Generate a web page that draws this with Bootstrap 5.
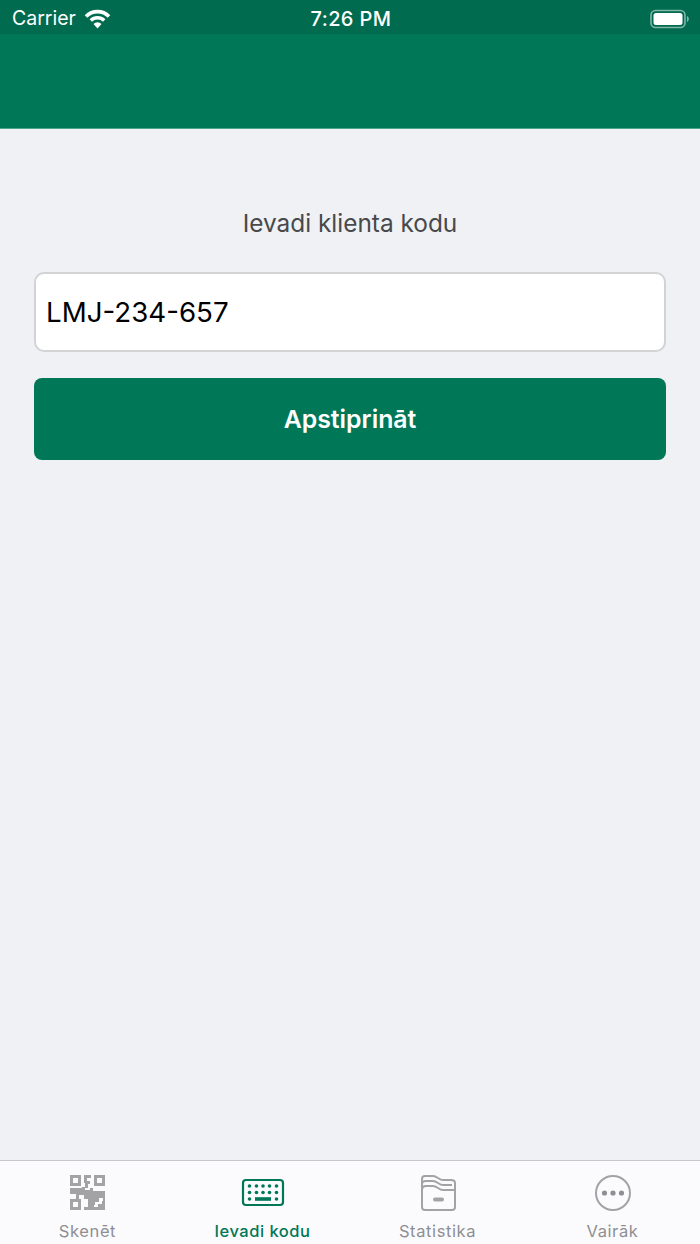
<!DOCTYPE html>
<html lang="lv">
<head>
  <meta charset="UTF-8">
  <title>Ievadi kodu</title>
  <link href="https://cdn.jsdelivr.net/npm/bootstrap@5.3.0/dist/css/bootstrap.min.css" rel="stylesheet">
  <style>
    body { font-family: Inter, "Liberation Sans", sans-serif; background: #eff1f5; }
    .app-screen { height: 1244px; width: 700px; overflow: hidden; }
    .status-bar { height: 34px; background: #006b4f; color: #fff; font-size: 19.5px; padding: 3px 10px 0 12px; }
    .status-left { width: 250px; }
    .status-right { width: 250px; }
    .status-time { font-size: 20px; font-weight: 500; letter-spacing: .4px; }
    .head-bar { height: 95px; background: #007857; border-bottom: 1px solid #4fa58c; }
    .main-area { padding: 80px 34px 0; }
    .code-title { font-size: 24.4px; line-height: 28px; color: #48494b; margin-bottom: 35px; }
    .code-input.form-control { height: 80px; font-size: 27.7px; color: #000; padding: 0 10px; border: 2px solid #d2d3d5; border-radius: 10px; background: #fff; margin-bottom: 26px; box-shadow: none; }
    .code-btn.btn { height: 82px; width: 100%; background: #007857; border: 0; padding-top: 8px; color: #fff; font-size: 24.800px; font-weight: 600; border-radius: 8px; }
    .tab-strip { height: 84px; background: #fbfbfd; border-top: 1px solid #c8c8cc; }
    .tab-item { width: 175px; color: #8e8e93; font-size: 16.5px; line-height: 20px; letter-spacing: .6px; padding-top: 13px; }
    .tab-item.is-active { color: #007857; font-weight: 500; letter-spacing: .5px; }
    .tab-icon { height: 38px; width: 50px; margin-bottom: 9px; display: block; }
  </style>
</head>
<body>
  <div class="app-screen d-flex flex-column">
    <!-- status bar -->
    <div class="status-bar d-flex align-items-center justify-content-between flex-shrink-0">
      <div class="status-left d-flex align-items-center gap-2">
        <span>Carrier</span>
        <svg width="27" height="20" viewBox="0 0 27 20">
          <path d="M2 7.5a16 16 0 0 1 23 0" fill="none" stroke="#fff" stroke-width="3.6"/>
          <path d="M6.8 11.5a9.4 9.4 0 0 1 13.4 0" fill="none" stroke="#fff" stroke-width="3.4"/>
          <path d="M9.5 15a5.6 5.6 0 0 1 8 0L13.5 19.5z" fill="#fff"/>
        </svg>
      </div>
      <div class="status-time">7:26 PM</div>
      <div class="status-right d-flex justify-content-end align-items-center">
        <svg width="40" height="20" viewBox="0 0 40 20">
          <rect x="1" y="1.5" width="34" height="17" rx="4.5" fill="none" stroke="#fff" stroke-opacity=".5" stroke-width="1.6"/>
          <rect x="3.5" y="4" width="29" height="12" rx="2.5" fill="#fff"/>
          <path d="M37 7v6c1.200-.5 1.800-1.600 1.800-3s-.6-2.500-1.800-3z" fill="#fff" fill-opacity=".5"/>
        </svg>
      </div>
    </div>
    <div class="head-bar flex-shrink-0"></div>

    <!-- form -->
    <div class="main-area flex-grow-1">
      <div class="code-title text-center">Ievadi klienta kodu</div>
      <input type="text" class="form-control code-input" value="LMJ-234-657">
      <button type="button" class="btn code-btn">Apstiprināt</button>
    </div>

    <!-- tabs -->
    <div class="tab-strip d-flex flex-shrink-0 overflow-hidden">
      <div class="tab-item d-flex flex-column align-items-center">
        <svg class="tab-icon" viewBox="0 0 50 38" fill="#a3a3a6">
          <path fill-rule="evenodd" d="M7 1h11v11H7zM10 4v5h5V4zM31 1h11v11H31zM34 4v5h5V4zM7 25h11v11H7zM10 28v5h5v-5z"/>
          <path d="M21 1h7v3h-4v3h3v3h-2v4h-3V9h-1zM7 14h12v-1h3v3h5v-2h3v3h12v6H30v2h-2v11h-7v-3h4v-8h-4v-4h-5v4h-3v-5H7z"/>
          <path fill-rule="evenodd" d="M28 21h14v15H28zM36 24v4h-4v3h-1v2h4v-3h4v-3h1v-3z"/>
        </svg>
        <span>Skenēt</span>
      </div>
      <div class="tab-item is-active d-flex flex-column align-items-center">
        <svg class="tab-icon" viewBox="0 0 50 38">
          <rect x="5" y="6" width="40" height="25" rx="3" fill="none" stroke="#007857" stroke-width="2.2"/>
          <g fill="#007857">
            <circle cx="11.500" cy="12" r="1.800"/><circle cx="18.500" cy="12" r="1.800"/><circle cx="25" cy="12" r="1.800"/><circle cx="31.500" cy="12" r="1.800"/><circle cx="38.500" cy="12" r="1.800"/>
            <circle cx="11.500" cy="18.500" r="1.800"/><circle cx="18.500" cy="18.500" r="1.800"/><circle cx="25" cy="18.500" r="1.800"/><circle cx="31.500" cy="18.500" r="1.800"/><circle cx="38.500" cy="18.500" r="1.800"/>
            <circle cx="11.500" cy="25" r="1.800"/><circle cx="38.500" cy="25" r="1.800"/>
            <rect x="17" y="23.200" width="16" height="3.600"/>
          </g>
        </svg>
        <span>Ievadi kodu</span>
      </div>
      <div class="tab-item d-flex flex-column align-items-center">
        <svg class="tab-icon" viewBox="0 0 50 38" fill="none" stroke="#a3a3a6" stroke-width="2">
          <path d="M9 16V5q0-3 3-3h8c4 0 6 4 10 4h8q4 0 4 3v7"/>
          <path d="M9 10c0-3 2-3 4-3h7c4 0 6 4 10 4h9"/>
          <path d="M9 16c0-3 2-4 4-4h7c4 0 6 4 10 4h12"/>
          <path d="M9 16v17q0 3 3 3h27q3 0 3-3V16"/>
          <rect x="20" y="23.500" width="11" height="4" rx="2" fill="#a3a3a6" stroke="none"/>
        </svg>
        <span>Statistika</span>
      </div>
      <div class="tab-item d-flex flex-column align-items-center">
        <svg class="tab-icon" viewBox="0 0 50 38">
          <circle cx="25" cy="19" r="17" fill="none" stroke="#a3a3a6" stroke-width="2"/>
          <g fill="#8e8e93"><circle cx="16.500" cy="19" r="2.600"/><circle cx="25" cy="19" r="2.600"/><circle cx="33.500" cy="19" r="2.600"/></g>
        </svg>
        <span>Vairāk</span>
      </div>
    </div>
  </div>
  <script src="https://cdn.jsdelivr.net/npm/bootstrap@5.3.0/dist/js/bootstrap.bundle.min.js"></script>
</body>
</html>
